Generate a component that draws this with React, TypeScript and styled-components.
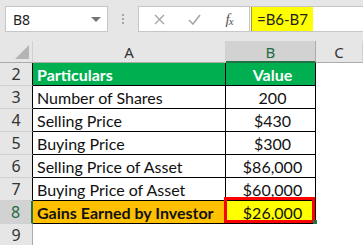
import React from 'react';
import styled, { createGlobalStyle } from 'styled-components';

const GlobalStyle = createGlobalStyle`
  html, body {
    margin: 0;
    padding: 0;
    background: #ffffff;
  }
  body {
    font-family: Lato, "Liberation Sans", sans-serif;
    overflow: hidden;
  }
`;

const Screen = styled.div`
  width: 363px;
  height: 245px;
  overflow: hidden;
  background: #ffffff;
`;

/* ---------- formula bar ---------- */

const TopBar = styled.div`
  height: 41px;
  box-sizing: border-box;
  padding: 6px 0 0 5px;
  background: #e6e6e6;
  display: flex;
  align-items: flex-start;
`;

const NameBox = styled.div`
  width: 103px;
  height: 26px;
  box-sizing: border-box;
  background: #fff;
  border: 1px solid #c6c6c6;
  display: flex;
  align-items: center;
  justify-content: space-between;
  padding: 0 6px 0 7px;
  font-family: "Noto Sans", "Open Sans", sans-serif;
  font-size: 14px;
  color: #222;
`;

const DropArrow = styled.span`
  width: 0;
  height: 0;
  border-left: 5px solid transparent;
  border-right: 5px solid transparent;
  border-top: 5px solid #777;
`;

const Grip = styled.div`
  width: 30px;
  height: 26px;
  display: flex;
  flex-direction: column;
  align-items: center;
  justify-content: center;
  gap: 2px;
  span {
    width: 2px;
    height: 2px;
    background: #a6a6a6;
  }
`;

const FormulaBox = styled.div`
  flex: 1;
  height: 26px;
  box-sizing: border-box;
  background: #fff;
  border: 1px solid #c6c6c6;
  border-right: none;
  display: flex;
`;

const IconArea = styled.div`
  width: 110px;
  display: flex;
  align-items: center;
  border-right: 1px solid #c6c6c6;
`;

const IconSlot = styled.div<{ $w: number }>`
  width: ${(p) => p.$w}px;
  display: flex;
  justify-content: center;
  align-items: center;
`;

const Fx = styled.span`
  font-family: "Liberation Serif", serif;
  font-style: italic;
  font-size: 15px;
  color: #555;
  letter-spacing: -1px;
  sub {
    font-size: 11px;
    vertical-align: -1px;
  }
`;

const Highlight = styled.div`
  margin-left: 1px;
  width: 61px;
  background: #ffff00;
  border-left: 1px solid #9c9c30;
  display: flex;
  align-items: center;
  justify-content: center;
  font-family: Lato, "Liberation Sans", sans-serif;
  font-size: 15px;
  color: #222;
`;

/* ---------- sheet ---------- */

const Sheet = styled.div`
  display: grid;
  grid-template-columns: 33px 193px 90px 1fr;
  grid-template-rows: 22px repeat(8, 23px);
`;

const Corner = styled.div`
  background: #e6e6e6;
  border-bottom: 1px solid #ababab;
  border-right: 1px solid #d0d0d0;
  box-sizing: border-box;
  display: flex;
  align-items: flex-end;
  justify-content: flex-end;
  padding: 0 3px 3px 0;
`;

const Triangle = styled.span`
  width: 0;
  height: 0;
  border-left: 14px solid transparent;
  border-bottom: 14px solid #b4b4b4;
`;

const ColHead = styled.div<{ $sel?: boolean }>`
  box-sizing: border-box;
  background: ${(p) => (p.$sel ? '#d2d2d2' : '#e6e6e6')};
  color: ${(p) => (p.$sel ? '#1e6b45' : '#333')};
  border-right: 1px solid ${(p) => (p.$sel ? '#ababab' : '#d0d0d0')};
  border-bottom: ${(p) => (p.$sel ? '2px solid #217346' : '1px solid #ababab')};
  display: flex;
  align-items: center;
  justify-content: center;
  font-family: "Noto Sans", "Open Sans", sans-serif;
  font-size: 15px;
  padding-top: 1px;
`;

const RowHead = styled.div<{ $edge: 'table' | 'sel' | 'none' }>`
  box-sizing: border-box;
  background: ${(p) => (p.$edge === 'sel' ? '#d2d2d2' : '#e6e6e6')};
  color: ${(p) => (p.$edge === 'sel' ? '#1e6b45' : '#333')};
  border-bottom: 1px solid #d0d0d0;
  border-right: ${(p) =>
    p.$edge === 'sel'
      ? '2px solid #217346'
      : p.$edge === 'table'
      ? '1px solid #000'
      : '1px solid #ababab'};
  display: flex;
  align-items: center;
  justify-content: center;
  font-family: "Noto Sans", "Open Sans", sans-serif;
  font-size: 16px;
`;

type Fill = 'green' | 'orange' | 'yellow' | 'white';

const fills: Record<Fill, string> = {
  green: '#00b050',
  orange: '#ffc000',
  yellow: '#ffff00',
  white: '#ffffff',
};

const Cell = styled.div<{ $fill?: Fill; $bold?: boolean; $center?: boolean; $last?: boolean }>`
  position: relative;
  box-sizing: border-box;
  background: ${(p) => fills[p.$fill || 'white']};
  color: ${(p) => (p.$fill === 'green' ? '#fff' : '#111')};
  font-weight: ${(p) => (p.$bold ? 700 : 400)};
  font-size: 16px;
  border-right: 1px solid #000;
  border-bottom: ${(p) => (p.$last ? 'none' : '1px solid #000')};
  display: flex;
  align-items: center;
  justify-content: ${(p) => (p.$center ? 'center' : 'flex-start')};
  padding: 1px 0 0 4px;
  white-space: nowrap;
  overflow: hidden;
`;

const Blank = styled.div`
  background: #fff;
`;

const Marked = styled(Cell)`
  overflow: visible;
  &::after {
    content: '';
    position: absolute;
    left: -2px;
    top: -4px;
    right: 0;
    bottom: 0;
    border: 3px solid #ff0000;
  }
  &::before {
    content: '';
    position: absolute;
    right: -2px;
    bottom: -1px;
    width: 4px;
    height: 4px;
    background: #217346;
    z-index: 2;
  }
`;

const rows: Array<[string, string]> = [
  ['Number of Shares', '200'],
  ['Selling Price', '$430'],
  ['Buying Price', '$300'],
  ['Selling Price of Asset', '$86,000'],
  ['Buying Price of Asset', '$60,000'],
];

export default function App() {
  return (
    <Screen>
      <GlobalStyle />
      <TopBar>
        <NameBox>
          B8
          <DropArrow />
        </NameBox>
        <Grip>
          <span />
          <span />
          <span />
        </Grip>
        <FormulaBox>
          <IconArea>
            <IconSlot $w={40}>
              <svg width="11" height="11" viewBox="0 0 11 11">
                <path d="M1 1 L10 10 M10 1 L1 10" stroke="#a6a6a6" strokeWidth="1.4" fill="none" />
              </svg>
            </IconSlot>
            <IconSlot $w={30}>
              <svg width="13" height="11" viewBox="0 0 13 11">
                <path d="M1 6 L5 10 L12 1" stroke="#a6a6a6" strokeWidth="1.6" fill="none" />
              </svg>
            </IconSlot>
            <IconSlot $w={40}>
              <Fx>
                f<sub>x</sub>
              </Fx>
            </IconSlot>
          </IconArea>
          <Highlight>=B6-B7</Highlight>
        </FormulaBox>
      </TopBar>

      <Sheet>
        <Corner>
          <Triangle />
        </Corner>
        <ColHead>A</ColHead>
        <ColHead $sel>B</ColHead>
        <ColHead>C</ColHead>

        <RowHead $edge="table">2</RowHead>
        <Cell $fill="green" $bold>
          Particulars
        </Cell>
        <Cell $fill="green" $bold $center>
          Value
        </Cell>
        <Blank />

        {rows.map(([label, value], i) => (
          <React.Fragment key={label}>
            <RowHead $edge="table">{i + 3}</RowHead>
            <Cell>{label}</Cell>
            <Cell $center>{value}</Cell>
            <Blank />
          </React.Fragment>
        ))}

        <RowHead $edge="sel">8</RowHead>
        <Cell $fill="orange" $bold>
          Gains Earned by Investor
        </Cell>
        <Marked $fill="yellow" $center>
          $26,000
        </Marked>
        <Blank />

        <RowHead $edge="none">9</RowHead>
        <Blank />
        <Blank />
        <Blank />
      </Sheet>
    </Screen>
  );
}
